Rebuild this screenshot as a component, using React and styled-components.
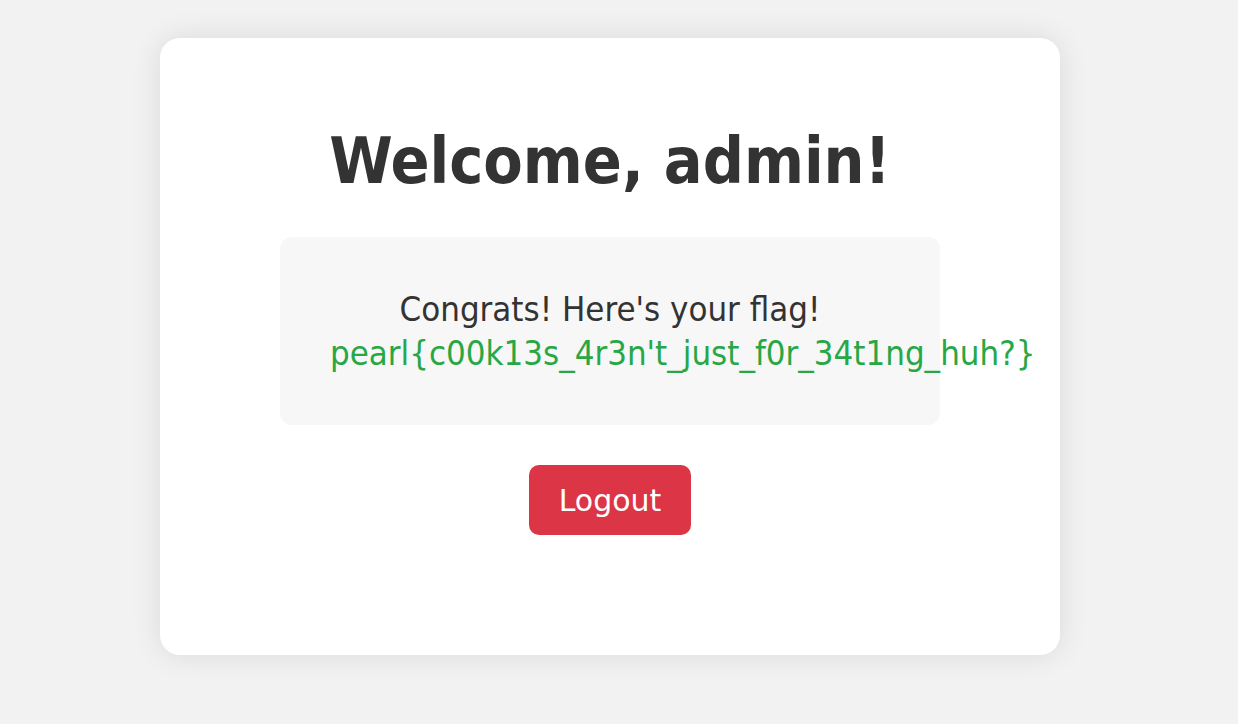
import React from "react";
import styled, { createGlobalStyle } from "styled-components";

const Global = createGlobalStyle`
  html, body {
    margin: 0;
    padding: 0;
    background: #f2f2f2;
  }
  body {
    font-family: "DejaVu Sans", Verdana, sans-serif;
    font-stretch: condensed;
    color: #333;
  }
`;

const Page = styled.div`
  min-height: 724px;
  box-sizing: border-box;
  padding: 38px 0 0 160px;
`;

const Card = styled.div`
  width: 900px;
  height: 617px;
  box-sizing: border-box;
  background: #fff;
  border-radius: 20px;
  box-shadow: 0 0 30px rgba(0, 0, 0, 0.1);
  padding: 85px 120px 0;
  display: flex;
  flex-direction: column;
  align-items: center;
`;

const Title = styled.h1`
  margin: 0 0 38px;
  font-size: 64px;
  line-height: 76px;
  font-weight: bold;
  color: #333;
  text-align: center;
`;

const FlagBox = styled.div`
  align-self: stretch;
  background: #f7f7f7;
  border-radius: 12px;
  padding: 50px;
  text-align: center;
  font-size: 34.5px;
  line-height: 44px;
  color: #333;
`;

const Flag = styled.span`
  color: #28a745;
`;

const LogoutButton = styled.button`
  margin-top: 40px;
  width: 162px;
  height: 70px;
  border: none;
  border-radius: 10px;
  background: #dc3545;
  color: #fff;
  font-family: "DejaVu Sans", Verdana, sans-serif;
  font-size: 30px;
  cursor: pointer;
`;

export default function App() {
  return (
    <>
      <Global />
      <Page>
        <Card>
          <Title>Welcome, admin!</Title>
          <FlagBox>
            Congrats! Here's your flag!
            <br />
            <Flag>pearl&#123;c00k13s_4r3n't_just_f0r_34t1ng_huh?&#125;</Flag>
          </FlagBox>
          <LogoutButton>Logout</LogoutButton>
        </Card>
      </Page>
    </>
  );
}
